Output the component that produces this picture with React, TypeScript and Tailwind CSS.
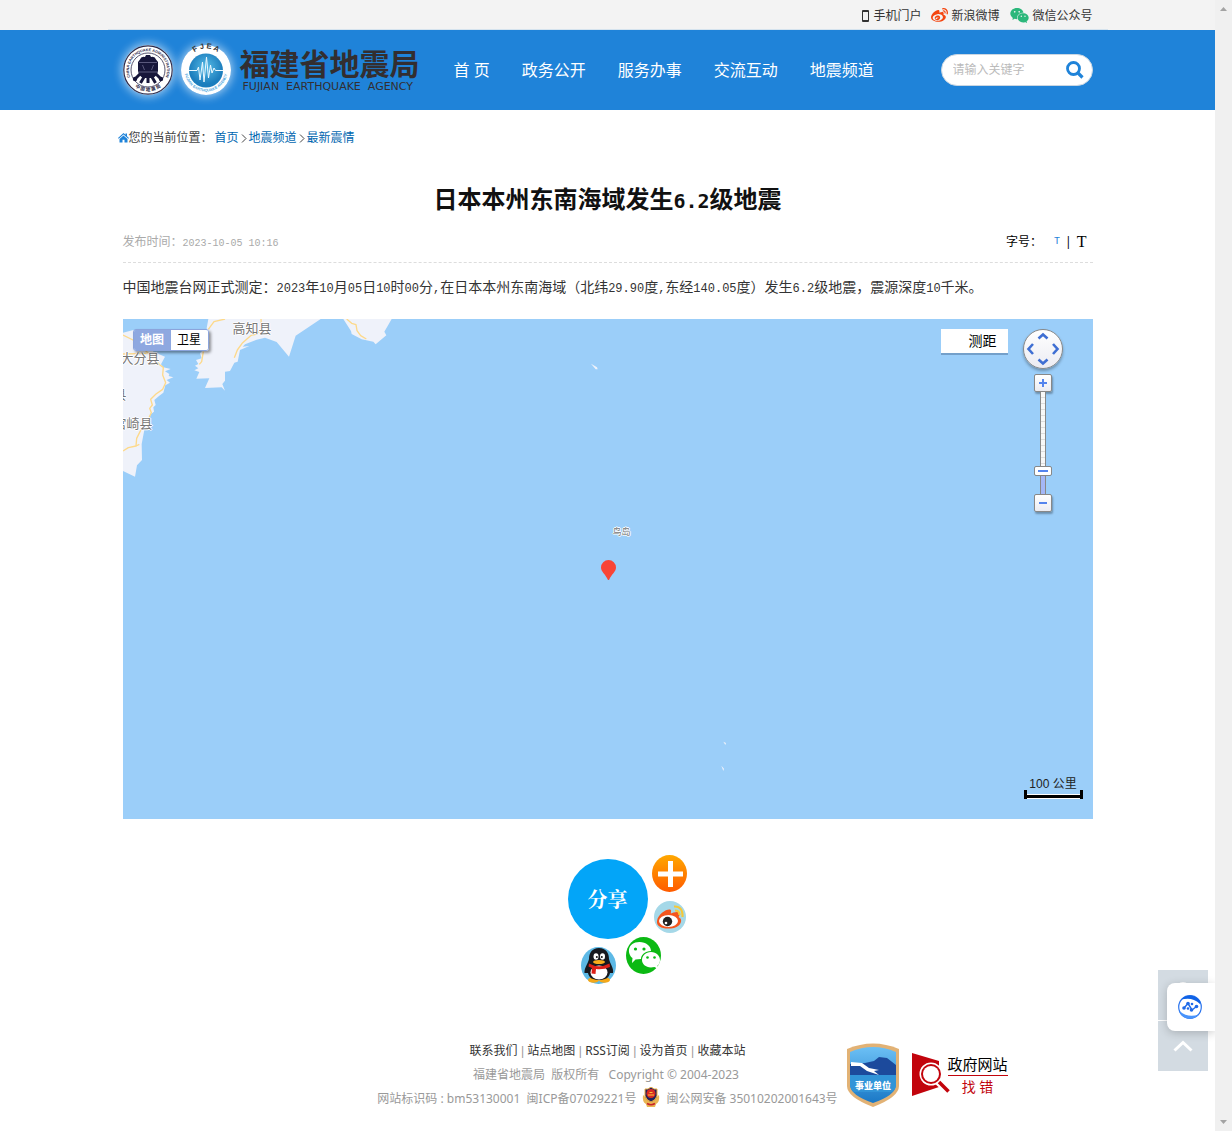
import { useState } from 'react';
import { FaWeibo } from 'react-icons/fa';
import { AiFillWechat } from 'react-icons/ai';

const NAV_ITEMS = ['首 页', '政务公开', '服务办事', '交流互动', '地震频道'];
const FOOTER_LINKS = ['联系我们', '站点地图', 'RSS订阅', '设为首页', '收藏本站'];

function AdministrationSeal() {
  return (
    <svg className="w-[50px] h-[50px] shrink-0 overflow-visible rounded-full shadow-[0_0_8px_2px_rgba(255,255,255,0.55)]" viewBox="0 0 50 50">
      <defs>
        <path id="seal-top" d="M8.5 34.5 A19 19 0 1 1 41.5 34.5" />
        <path id="seal-bottom" d="M9 39 A21.5 21.5 0 0 0 41 39" />
      </defs>
      <circle cx="25" cy="25" r="25" fill="#fff" />
      <circle cx="25" cy="25" r="24.2" fill="none" stroke="#2c2a4a" strokeWidth="1.2" />
      <circle cx="25" cy="25" r="17" fill="none" stroke="#2c2a4a" strokeWidth="0.8" />
      <text fontSize="3.8" fontWeight="700" fill="#2c2a4a" fontFamily="Liberation Sans, sans-serif">
        <textPath href="#seal-top" startOffset="50%" textAnchor="middle">CHINA EARTHQUAKE ADMINISTRATION</textPath>
      </text>
      <text fontSize="4.6" fontWeight="700" fill="#2c2a4a" fontFamily="Noto Sans CJK SC, sans-serif">
        <textPath href="#seal-bottom" startOffset="50%" textAnchor="middle">中 国 地 震 局</textPath>
      </text>
      <path d="M17 14.5 Q18 11 22 12 L23 10 H27 L28 12 Q32 11 33 14.5 L35 17 V26 Q34 31 30 33 H20 Q16 31 15 26 V17Z" fill="#17163a" />
      <path d="M17 29 L12 34 M33 29 L38 34 M21 32 L17.5 38 M29 32 L32.500 38 M25 33 V38" stroke="#17163a" strokeWidth="3" />
      <path d="M16 17.500 H34 M15.500 27 H34.500 M19.500 20 L21.500 25 M30.500 20 L28.500 25" stroke="#77769a" strokeWidth="0.7" fill="none" />
      <circle cx="12" cy="34" r="2.2" fill="#17163a" />
      <circle cx="38" cy="34" r="2.2" fill="#17163a" />
    </svg>
  );
}

function AgencySeal() {
  return (
    <svg className="w-[50px] h-[50px] shrink-0 overflow-visible rounded-full shadow-[0_0_8px_2px_rgba(255,255,255,0.55)]" viewBox="0 0 50 50">
      <defs>
        <radialGradient id="agency-globe" cx="0.5" cy="0.4">
          <stop offset="0" stopColor="#58bce6" />
          <stop offset="1" stopColor="#1b7dbd" />
        </radialGradient>
        <path id="agency-top" d="M6.500 18 A19 19 0 0 1 43.500 18" />
        <path id="agency-bottom" d="M3.500 25 A21.500 21.500 0 0 0 46.500 25" />
      </defs>
      <circle cx="25" cy="25" r="25" fill="#fff" />
      <circle cx="25" cy="25.500" r="17" fill="url(#agency-globe)" />
      <text fontSize="7.500" fontWeight="700" fill="#333" fontFamily="Liberation Sans, sans-serif">
        <textPath href="#agency-top" startOffset="50%" textAnchor="middle">F J E A</textPath>
      </text>
      <text fontSize="3.800" fontWeight="700" fill="#4ba5dd" fontFamily="Liberation Sans, sans-serif">
        <textPath href="#agency-bottom" startOffset="50%" textAnchor="middle">FUJIAN EARTHQUAKE AGENCY</textPath>
      </text>
      <path d="M8 25.500 H16 L17.500 22 L19 35 L21.500 17 L23 37 L25.500 12 L27.500 33 L29.500 20 L31 28 L33 23 L34.500 25.500 H42" fill="none" stroke="#eaf8ff" strokeWidth="1" />
    </svg>
  );
}

function TopBar() {
  return (
    <div className="bg-[#f3f3f3] h-[30px]">
      <div className="max-w-[1000px] h-full mx-auto px-[15px] pt-[2px] border-b border-[#d5e3ee] flex items-center justify-end gap-[10px] text-[12px] text-[#333]">
        <a href="#mobile" className="flex items-center gap-1">
          <svg className="w-[7px] h-3" viewBox="0 0 7 12">
            <rect x="0" y="0" width="7" height="12" rx="1" fill="#333" />
            <rect x="1" y="2" width="5" height="8" fill="#f3f3f3" />
          </svg>
          手机门户
        </a>
        <a href="#weibo" className="flex items-center gap-[3px]">
          <FaWeibo size={17} color="#f4450f" />
          新浪微博
        </a>
        <a href="#wechat" className="flex items-center gap-[2px]">
          <AiFillWechat size={21} color="#2bb77b" />
          微信公众号
        </a>
      </div>
    </div>
  );
}

function Header() {
  return (
    <header className="bg-[#1f83d9]">
      <div className="max-w-[970px] h-20 mx-auto flex items-center">
        <a href="#home" className="flex items-center text-[#332e30]">
          <span className="flex gap-2">
            <AdministrationSeal />
            <AgencySeal />
          </span>
          <span className="block w-[180px] ml-[9px]">
            <span className="block text-[30px] leading-[34px] font-bold whitespace-nowrap">福建省地震局</span>
            <span className="block pl-[3px] text-[11px] leading-3 font-['DejaVu_Sans'] whitespace-pre">FUJIAN  EARTHQUAKE  AGENCY</span>
          </span>
        </a>
        <nav className="flex ml-[18px]">
          {NAV_ITEMS.map((item) => (
            <a key={item} href="#nav" className="px-4 text-[16px] leading-[80px] text-white whitespace-nowrap">
              {item}
            </a>
          ))}
        </nav>
        <form className="ml-auto w-[152px] h-8 pl-[11px] pr-2 rounded-full bg-white border border-[#c9d6e2] flex items-center" onSubmit={(e) => e.preventDefault()}>
          <input
            type="text"
            aria-label="搜索"
            placeholder="请输入关键字"
            className="min-w-0 flex-1 text-[12px] placeholder:text-[#bbb] outline-none"
          />
          <button type="submit" aria-label="搜索">
            <svg className="w-[18px] h-[18px]" viewBox="0 0 18 18" fill="none" stroke="#1f83d9">
              <circle cx="7.500" cy="7.500" r="6" strokeWidth="2.800" />
              <path d="M12 12 L16.500 16.500" strokeWidth="3.200" />
            </svg>
          </button>
        </form>
      </div>
    </header>
  );
}

function Breadcrumb() {
  return (
    <nav className="max-w-[980px] w-full mx-auto h-[54px] pt-[2px] flex items-center text-[12px] text-[#444]">
      <svg className="w-[11px] h-[10px]" viewBox="0 0 11 10" fill="#1f83d9">
        <path d="M5.500 0 L7.500 1.800 V0.500 H9 V3.200 L11 5 L10.300 5.700 L5.500 1.500 L0.700 5.700 L0 5Z" />
        <path d="M5.500 2.500 L9.500 6 V9.500 H6.500 V6.800 H4.500 V9.500 H1.500 V6Z" />
      </svg>
      <span className="w-[86px]">您的当前位置：</span>
      <a href="#home" className="text-[#0066b0]">首页</a>
      <Chevron />
      <a href="#channel" className="text-[#0066b0]">地震频道</a>
      <Chevron />
      <a href="#latest" className="text-[#0066b0]">最新震情</a>
    </nav>
  );
}

function Chevron() {
  return (
    <svg className="w-[10px] h-[9px]" viewBox="0 0 10 9" fill="none" stroke="#444">
      <path d="M3 0.500 L7 4.500 L3 8.500" />
    </svg>
  );
}

// Figures are set half as wide as the Chinese characters around them
function Num({ children }: { children: string }) {
  return <span className="font-['Liberation_Mono'] text-[12px] leading-none">{children}</span>;
}

function MapLabel({ text, className }: { text: string; className: string }) {
  return (
    <span
      className={`absolute whitespace-nowrap text-[#777] [text-shadow:1px_0_#fff,-1px_0_#fff,0_1px_#fff,0_-1px_#fff] ${className}`}
    >
      {text}
    </span>
  );
}

function Coastline() {
  return (
    <svg className="absolute left-0 top-0 w-[970px] h-[500px]" viewBox="39 447 2910 1500">
      <g fill="#eff2fa">
        <path d="M39 488 L70 480 L110 500 L130 545 L165 560 L153 583 L160 592 L182 597 L165 604 L178 612 L176 618 L190 622 L170 630 L180 638 L166 646 L160 668 L147 678 L133 690 L137 705 L130 712 L132 725 L122 733 L115 760 L103 780 L95 822 L96 870 L81 886 L75 920 L39 903Z" />
        <path d="M295 447 L290 475 L298 520 L270 550 L275 565 L258 570 L265 582 L255 587 L265 595 L253 601 L268 606 L259 626 L298 625 L285 654 L335 652 L345 662 L337 642 L345 632 L345 605 L360 603 L373 578 L383 575 L390 540 L418 528 L398 530 L405 523 L440 509 L465 503 L500 516 L537 560 L557 497 L632 447Z" />
        <path d="M700 447 L723 483 L725 492 L755 508 L790 515 L797 523 L829 496 L823 485 L845 447Z" />
        <path d="M1443 581 L1461 592 L1463 598 L1457 598Z" />
        <path d="M1840 1715 L1848 1719 L1846 1725Z M1834 1787 L1842 1796 L1840 1803Z" />
      </g>
      <g fill="none" stroke="#fdd98a" strokeWidth="4" strokeLinejoin="round">
        <path d="M39 495 L75 513 L110 545 L150 585 L160 592 L158 615 L167 638 L158 658 L138 672 L122 688 L127 705 L119 715 L124 728 L116 745 L90 785 L80 805 L78 828 L55 833 L39 843" />
        <path d="M78 828 L88 823 M39 552 L110 550" />
        <path d="M345 447 L312 455 L295 478 M280 545 L275 575 L268 583 M453 447 L455 480 L437 493 L422 497 L398 518 L382 540 L373 563" />
        <path d="M710 447 L725 460 L738 464 L741 482 L752 497 L769 507" />
      </g>
    </svg>
  );
}

const ZOOM_BUTTON =
  'w-[18px] h-[18px] rounded-[2px] border border-[#888] bg-gradient-to-b from-white to-[#ececf2] shadow-[1px_2px_2px_rgba(0,0,0,0.3)] flex items-center justify-center';

function MapControls() {
  const [zoom, setZoom] = useState(6);

  return (
    <div className="absolute right-[30px] top-[10px] flex flex-col items-center">
      <button aria-label="平移" className="w-10 h-10 mb-[5px] rounded-full border border-[#888] bg-gradient-to-b from-white to-[#ececf2] shadow-[0_2px_3px_rgba(0,0,0,0.3)]">
        <svg viewBox="1 1 38 38" fill="none" stroke="#3f6fd3" strokeWidth="2.600">
          <path d="M15.500 9.500 L20 5.500 L24.500 9.500 M15.500 30.500 L20 34.500 L24.500 30.500 M10 15 L5.500 20 L10 25 M30 15 L34.500 20 L30 25" />
        </svg>
      </button>
      <button aria-label="放大" className={ZOOM_BUTTON} onClick={() => setZoom(Math.min(18, zoom + 1))}>
        <svg className="w-2 h-2" viewBox="0 0 8 8" stroke="#5484ed" strokeWidth="2">
          <path d="M0 4 H8 M4 0 V8" />
        </svg>
      </button>
      <div className="grid justify-items-center h-[102px]">
        <div className="col-start-1 row-start-1 w-[6px] h-full border-x border-[#888] bg-[repeating-linear-gradient(#f8f8f8_0_5px,#ddd_5px_6px)] flex items-end">
          <div className="w-full h-6 bg-[#a4b7f7]"></div>
        </div>
        <input
          type="range"
          aria-label="缩放级别"
          min={3}
          max={18}
          value={zoom}
          onChange={(e) => setZoom(Number(e.target.value))}
          className="col-start-1 row-start-1 w-[18px] h-[102px] m-0 appearance-none bg-transparent [writing-mode:vertical-lr] [direction:rtl] [&::-webkit-slider-thumb]:appearance-none [&::-webkit-slider-thumb]:w-[18px] [&::-webkit-slider-thumb]:h-[10px] [&::-webkit-slider-thumb]:rounded-[2px] [&::-webkit-slider-thumb]:border [&::-webkit-slider-thumb]:border-[#888] [&::-webkit-slider-thumb]:bg-[linear-gradient(#5484ed,#5484ed),linear-gradient(#fff,#fff)] [&::-webkit-slider-thumb]:bg-[length:10px_2px,100%_100%] [&::-webkit-slider-thumb]:bg-center [&::-webkit-slider-thumb]:bg-no-repeat"
        />
      </div>
      <button aria-label="缩小" className={ZOOM_BUTTON} onClick={() => setZoom(Math.max(3, zoom - 1))}>
        <svg className="w-2 h-2" viewBox="0 0 8 8" stroke="#5484ed" strokeWidth="2">
          <path d="M0 4 H8" />
        </svg>
      </button>
    </div>
  );
}

function EpicenterMap() {
  return (
    <div className="relative h-[500px] overflow-hidden bg-[#9bcef9]">
      <Coastline />
      <MapLabel text="高知县" className="left-[110px] top-0 text-[13px] leading-[18px]" />
      <MapLabel text="大分县" className="left-[-2px] top-[30px] text-[13px] leading-[18px]" />
      <MapLabel text="县" className="left-[-9px] top-[66px] text-[13px] leading-[18px]" />
      <MapLabel text="宫崎县" className="left-[-9px] top-[95px] text-[13px] leading-[18px]" />
      <MapLabel text="鸟岛" className="left-[490px] top-[207px] text-[9px] leading-3" />

      {/* Epicenter pin */}
      <svg className="absolute left-[478px] top-[241px] w-[15px] h-5" viewBox="0 0 15 20">
        <path d="M7.500 0 A7.500 7.500 0 0 1 15 7.500 C15 12 10.500 14 8 20 H7 C4.500 14 0 12 0 7.500 A7.500 7.500 0 0 1 7.500 0Z" fill="#f94436" />
      </svg>

      <div className="absolute left-[10px] top-[10px] flex rounded-[3px] border border-[#8ba4dc] shadow-[2px_2px_3px_rgba(0,0,0,0.4)] text-[12px] leading-5 overflow-hidden">
        <button className="w-[37px] bg-[#8ea8e0] text-white font-bold">地图</button>
        <button className="w-[37px] bg-white text-black">卫星</button>
      </div>

      <button className="absolute right-[85px] top-[10px] w-[67px] h-6 pl-7 bg-white text-black text-[14px] leading-6 text-left shadow-[0_2px_0_rgba(90,130,170,0.6)]">
        测距
      </button>
      <MapControls />

      <div className="absolute right-[10px] bottom-5 w-[59px] text-center text-[12px] leading-[14px] font-['Liberation_Sans','Noto_Sans_CJK_SC',sans-serif] text-[#222]">
        100 公里
        <svg className="block w-[59px] h-[9px] -mt-px" viewBox="0 0 59 9">
          <rect x="1" y="4" width="57" height="5" fill="#fff" />
          <path d="M0 0 H3 V5 H56 V0 H59 V9 H56 V8 H3 V9 H0Z" fill="#000" />
        </svg>
      </div>
    </div>
  );
}

function Share() {
  return (
    <div className="relative w-20 h-20 mx-auto mt-10">
      <button className="w-20 h-20 rounded-full bg-[#03a5f8] text-white text-[20px] font-bold font-['Noto_Serif_CJK_SC','Noto_Sans_CJK_SC',serif]">
        分享
      </button>
      <a href="#more" aria-label="更多" className="absolute left-[84px] top-[-4px]">
        <svg className="w-[35px] h-[37px]" viewBox="0 0 35 37">
          <defs>
            <linearGradient id="more-bg" x1="0" y1="0" x2="0" y2="1">
              <stop offset="0" stopColor="#ffa800" />
              <stop offset="1" stopColor="#ff5b00" />
            </linearGradient>
          </defs>
          <ellipse cx="17.500" cy="18.500" rx="17.500" ry="18.500" fill="url(#more-bg)" />
          <path d="M6 19 H31 M18.500 6 V32" stroke="#fff" strokeWidth="5" />
        </svg>
      </a>
      <a href="#sina" aria-label="新浪微博" className="absolute left-[86px] top-[42px]">
        <svg className="w-8 h-8" viewBox="0 0 32 32">
          <circle cx="16" cy="16" r="16" fill="#a5d8e8" />
          <path d="M3 20 C4 13 12 8 16 8.500 C18 9 16.500 12 17 12.500 C19 11.500 24 10 25.500 12 C26.500 14 24 15.500 25 16.500 C29 18 27.500 25 20 27 C10 29 2 26 3 20Z" fill="#f4551d" />
          <ellipse cx="14.500" cy="20" rx="9.500" ry="6" fill="#fff" />
          <circle cx="13.500" cy="20.500" r="4.700" fill="#222" />
          <circle cx="12" cy="22" r="1.300" fill="#fff" />
          <path d="M20 5.500 Q29 5 28.500 16 M21 9.500 Q25.500 9.500 25.500 14" fill="none" stroke="#f5c838" strokeWidth="2.200" />
        </svg>
      </a>
      <a href="#weixin" aria-label="微信" className="absolute left-[58px] top-[78px]">
        <svg className="w-[35px] h-[37px]" viewBox="0 0 35 37">
          <ellipse cx="17.500" cy="18.500" rx="17.500" ry="18.500" fill="#0bb913" />
          <path d="M13.500 5 C20 5 25 9 25 14 C19 14 15 18 15 22 L9.500 22.500 L6 26 L6.500 21 C1 17 1 5 13.500 5Z" fill="#fff" />
          <path d="M25 15 C30.500 15 34 19 34 23 C34 26 33 27.500 31.500 28.500 L32 32 L28.500 30 C21 32 16 27.500 16 23 C16 19 19.500 15 25 15Z" fill="#fff" />
          <g fill="#0bb913">
            <circle cx="9.500" cy="12" r="1.600" />
            <circle cx="18" cy="12" r="1.600" />
            <circle cx="21.500" cy="20.500" r="1.300" />
            <circle cx="28.500" cy="20.500" r="1.300" />
          </g>
        </svg>
      </a>
      <a href="#qq" aria-label="QQ好友" className="absolute left-[13px] top-[88px]">
        <svg className="w-[35px] h-[37px]" viewBox="0 0 35 37">
          <ellipse cx="17.500" cy="18.500" rx="17.500" ry="18.500" fill="#5db9e6" />
          <ellipse cx="12.500" cy="33" rx="5.500" ry="2.800" fill="#f5a818" />
          <ellipse cx="23.500" cy="33" rx="5.500" ry="2.800" fill="#f5a818" />
          <path d="M18 1 C25 1 28 6 28 12 C29 17 33 21 32 26 L29 26 C28 31 24 33 18 33 C12 33 8 31 7 26 L3.500 26 C3 21 7 17 8 12 C8 6 11 1 18 1Z" fill="#17191f" />
          <ellipse cx="18" cy="25.500" rx="8.500" ry="7" fill="#fff" />
          <ellipse cx="15" cy="9.500" rx="2.500" ry="3.300" fill="#fff" />
          <ellipse cx="21.500" cy="9.500" rx="2.500" ry="3.300" fill="#fff" />
          <circle cx="15.800" cy="10" r="1" fill="#111" />
          <circle cx="20.800" cy="10" r="1" fill="#111" />
          <ellipse cx="18" cy="15" rx="6" ry="2" fill="#f8ac1b" />
          <path d="M8 16.500 Q18 22 28.500 16.500 L29 20 Q22 23 15 22 L14.500 27 L10.500 26.500 L11 21 L7.500 19.500Z" fill="#dc2018" />
        </svg>
      </a>
    </div>
  );
}

function InstitutionBadge() {
  return (
    <svg className="w-[52px] h-16" viewBox="0 0 52 64">
      <defs>
        <linearGradient id="badge-sky" x1="0" y1="0" x2="0" y2="1">
          <stop offset="0" stopColor="#6cc0f5" />
          <stop offset="1" stopColor="#1a78c6" />
        </linearGradient>
      </defs>
      <path d="M0 6 Q26 -5 52 6 V43 Q52 54 26 64 Q0 54 0 43Z" fill="#e2b275" />
      <path d="M3 9 Q26 -1 49 9 V42 Q49 52 26 60 Q3 52 3 42Z" fill="url(#badge-sky)" />
      <path d="M3 21 L18 20 L27 18 L32 14 L40 15 L49 22 V32 H3Z" fill="#1c4a9c" />
      <path d="M4 19 L15 20 L22 25 L32 27 L27 28 L32 32 L20 28 L13 23 L4 23Z" fill="#fff" />
      <path d="M3 32 H49 V42 Q49 46 45 49 H7 Q3 46 3 42Z" fill="#3194d8" />
      <text x="26" y="46" textAnchor="middle" fontSize="9" fontWeight="900" fill="#fff" fontFamily="Noto Sans CJK SC, sans-serif">事业单位</text>
    </svg>
  );
}

function PoliceEmblem() {
  return (
    <svg className="w-[18px] h-5 mx-[6px] mb-1" viewBox="0 0 18 20">
      <path d="M1 8 Q0 15 4 17 L5 20 H13 L14 17 Q18 15 17 8 L9 15Z" fill="#e9b552" />
      <path d="M9 0 L12 2 L15 2 V9 Q14 13 9 15 Q4 13 3 9 V2 L6 2Z" fill="#20215c" stroke="#e8ac42" />
      <circle cx="9" cy="6.500" r="4.500" fill="#d92b22" />
      <path d="M6 8 H12 M7.500 5.500 H10.500" stroke="#f8c838" />
      <path d="M5 16.500 Q9 19 13 16.500" fill="none" stroke="#c9252a" strokeWidth="1.500" />
    </svg>
  );
}

function Footer() {
  return (
    <footer className="mt-[100px] pb-5 grid grid-cols-[1fr_auto_1fr] items-center text-[12px] leading-6 text-[#999]">
      <div className="col-start-2 min-w-[470px] text-center whitespace-pre">
        <p>
          {FOOTER_LINKS.map((link, i) => (
            <span key={link}>
              {i > 0 && <span className="font-['Liberation_Sans']"> | </span>}
              <a href="#footer" className="text-[#333]">{link}</a>
            </span>
          ))}
        </p>
        <p>福建省地震局  版权所有   Copyright © 2004-2023 </p>
        <p className="h-6 flex items-center justify-center">
          网站标识码 : bm53130001  闽ICP备07029221号
          <PoliceEmblem />
          闽公网安备 35010202001643号
        </p>
      </div>
      <div className="flex items-center gap-3 pl-1">
        <a href="#institution" aria-label="事业单位">
          <InstitutionBadge />
        </a>
        <a href="#report" className="flex items-center">
          <svg className="w-10 h-11" viewBox="0 0 40 44">
            <path d="M1 0 L28 8 V34 L1 43Z" fill="#c2040c" />
            <circle cx="20" cy="21" r="11.500" fill="#fff" />
            <path d="M26 28 L37 38" stroke="#fff" strokeWidth="7" />
            <circle cx="20" cy="21" r="10" fill="#c2040c" />
            <circle cx="20" cy="21" r="8" fill="#fff" />
            <path d="M28 29 L37.500 38.500" stroke="#c2040c" strokeWidth="3.500" />
          </svg>
          <span className="block -ml-[3px] text-center text-[15px] leading-[22px] text-black">
            <span className="block border-b border-[#c2040c]">政府网站</span>
            <span className="block text-[14px] text-[#c2040c]">找 错</span>
          </span>
        </a>
      </div>
    </footer>
  );
}

function FloatingTools() {
  return (
    <>
      <div className="fixed right-6 bottom-[60px] w-[50px] flex flex-col gap-px">
        <button aria-label="搜索" className="h-[50px] bg-[#d3dbe2] flex justify-center pt-[11px]">
          <svg className="w-4 h-4" viewBox="0 0 16 16">
            <circle cx="8" cy="8" r="7" fill="#fff" />
          </svg>
        </button>
        <button aria-label="返回顶部" className="h-[50px] bg-[#d3dbe2] flex items-center justify-center">
          <svg className="w-5 h-3" viewBox="0 0 20 12" fill="none" stroke="#fff" strokeWidth="3">
            <path d="M1.500 10.500 L10 2.500 L18.500 10.500" />
          </svg>
        </button>
      </div>
      <button aria-label="智能助手" className="fixed right-[17px] bottom-[100px] w-12 h-12 rounded-l-lg bg-white shadow-[0_2px_10px_rgba(0,0,0,0.2)] [clip-path:inset(-16px_0_-16px_-16px)] flex items-center pl-[11px]">
        <svg className="w-6 h-6" viewBox="0 0 24 24">
          <circle cx="12" cy="12" r="11.300" fill="#fff" stroke="#2c75ee" strokeWidth="1.200" />
          <path d="M3 4.500 C9 -2 19 0 22.500 7 L22 9 C16 3 10 3 3 4.500Z" fill="#0f62e6" />
          <path d="M1.500 16 C8 21.500 14 21.500 21 19.500 C15 26 5 25 1.500 17Z" fill="#4994fb" />
          <path d="M6 13 L10 8.500 L14 15 L18.500 11.500" fill="none" stroke="#1f6ae8" strokeWidth="1.500" />
          <g fill="#1f6ae8">
            <circle cx="6" cy="13" r="1.800" />
            <circle cx="10" cy="8.500" r="1.800" />
            <circle cx="13.500" cy="15" r="1.800" />
            <circle cx="18.500" cy="11.500" r="1.800" />
            <circle cx="14" cy="9" r="1.300" />
            <circle cx="10" cy="13.500" r="1.300" />
          </g>
        </svg>
      </button>
    </>
  );
}

export default function App() {
  return (
    <div className="min-h-screen flex bg-white font-['Noto_Sans','Noto_Sans_CJK_SC',sans-serif]">
      <div className="flex-1 min-w-0">
        <TopBar />
        <Header />
        <Breadcrumb />

        <main className="max-w-[970px] mx-auto">
          <h1 className="h-[70px] text-center text-[24px] leading-[70px] font-bold text-[#111]">
            日本本州东南海域发生<span className="font-['DejaVu_Sans_Mono'] text-[20px] leading-none">6.2</span>级地震
          </h1>
          <div className="h-[29px] flex items-start justify-between border-b border-dashed border-[#ddd] text-[12px] leading-4">
            <p className="text-[#aaa]">
              发布时间：<time className="font-['Liberation_Mono'] text-[10px] leading-none">2023-10-05 10:16</time>
            </p>
            <div className="flex items-center pr-[6px] text-black">
              <span className="w-12">字号：</span>
              <button className="font-['Liberation_Mono'] text-[10px] leading-4 text-[#1f83d9]">T</button>
              <span className="px-[5px]">|</span>
              <button className="font-['Liberation_Serif'] text-[16px] leading-4">T</button>
            </div>
          </div>
          <p className="pt-[10px] pb-[18px] text-[14px] leading-7 text-[#333]">
            中国地震台网正式测定：<Num>2023</Num>年<Num>10</Num>月<Num>05</Num>日<Num>10</Num>时<Num>00</Num>分<Num>,</Num>在日本本州东南海域（北纬<Num>29.90</Num>度<Num>,</Num>东经<Num>140.05</Num>度）发生<Num>6.2</Num>级地震，震源深度<Num>10</Num>千米。
          </p>
          <EpicenterMap />
          <Share />
        </main>

        <Footer />
      </div>

      {/* Scroll gutter */}
      <div className="w-[17px] shrink-0 bg-[#f0f0f0] flex flex-col items-center justify-between py-[7px]">
        <svg className="w-[7px] h-1" viewBox="0 0 7 4">
          <path d="M0 4 L3.500 0 L7 4Z" fill="#a3a3a3" />
        </svg>
        <svg className="w-[7px] h-1" viewBox="0 0 7 4">
          <path d="M0 0 L3.500 4 L7 0Z" fill="#a3a3a3" />
        </svg>
      </div>

      <FloatingTools />
    </div>
  );
}
